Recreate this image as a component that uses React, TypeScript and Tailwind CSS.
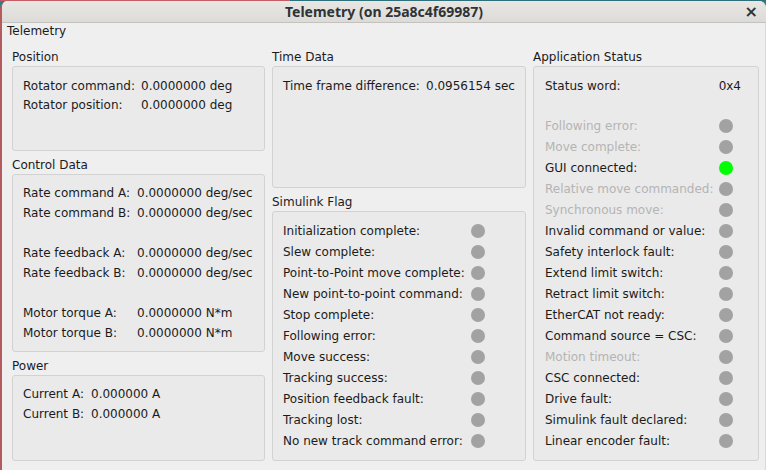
import type { ReactNode } from "react";

const font = { fontFamily: '"DejaVu Sans", sans-serif' };

function Box({ title, children, boxClass }: { title: string; children: ReactNode; boxClass: string }) {
  return (
    <div className="flex flex-col">
      <div className="h-[18px] pl-0 text-[12px] leading-[18px] text-[#1b1b1b]">{title}</div>
      <div className={`rounded-[3px] border border-[#d2d2d2] bg-[#eaeaea] ${boxClass}`}>{children}</div>
    </div>
  );
}

function Dot({ on }: { on?: boolean }) {
  return <span className={`block h-[14px] w-[14px] shrink-0 rounded-full ${on ? "bg-[#00ff00]" : "bg-[#a2a2a2]"}`} />;
}

const simulink = [
  "Initialization complete:",
  "Slew complete:",
  "Point-to-Point move complete:",
  "New point-to-point command:",
  "Stop complete:",
  "Following error:",
  "Move success:",
  "Tracking success:",
  "Position feedback fault:",
  "Tracking lost:",
  "No new track command error:",
];

const appStatus: { label: string; dim?: boolean; on?: boolean }[] = [
  { label: "Following error:", dim: true },
  { label: "Move complete:", dim: true },
  { label: "GUI connected:", on: true },
  { label: "Relative move commanded:", dim: true },
  { label: "Synchronous move:", dim: true },
  { label: "Invalid command or value:" },
  { label: "Safety interlock fault:" },
  { label: "Extend limit switch:" },
  { label: "Retract limit switch:" },
  { label: "EtherCAT not ready:" },
  { label: "Command source = CSC:" },
  { label: "Motion timeout:", dim: true },
  { label: "CSC connected:" },
  { label: "Drive fault:" },
  { label: "Simulink fault declared:" },
  { label: "Linear encoder fault:" },
];

function Pair({ label, value, w, h }: { label: string; value: string; w: string; h: string }) {
  return (
    <div className={`flex items-center ${h}`}>
      <span className={w}>{label}</span>
      <span>{value}</span>
    </div>
  );
}

export default function App() {
  return (
    <div className="h-[470px] w-[766px] overflow-hidden bg-[#2d7f8c]" style={font}>
      <div className="flex h-[1px]">
        <div className="w-[290px] bg-[#c35d63]" />
        <div className="flex-1 bg-[#2d6f7a]" />
      </div>
      <div className="flex h-[469px] flex-col overflow-hidden rounded-t-[7px] border-l-2 border-[#b35b5e] bg-[#efefef] text-[12px] text-[#1b1b1b]">
        <div className="relative flex h-[22px] items-center justify-center border-b border-[#c4c2bf] bg-gradient-to-b from-[#e9e7e4] to-[#dddbd8]">
          <span className="text-[14px] font-bold leading-[18px] text-[#2e3436]" style={{ fontFamily: '"Noto Sans", sans-serif' }}>
            Telemetry (on 25a8c4f69987)
          </span>
          <span className="absolute right-[8px] top-[2px] text-[16px] font-bold leading-[18px] text-[#2e3436]">×</span>
        </div>
        <div className="flex-1 border-r border-[#d8d8d8]">
          <div className="h-[17px] pl-[5px] leading-[17px]">Telemetry</div>
          <div className="grid grid-cols-[253px_254px_226px] gap-x-[7px] pl-[10px] pt-[8px]">
            <div className="flex flex-col gap-[5px]">
              <Box title="Position" boxClass="h-[85px] pt-[9px] pl-[10px]">
                <Pair label="Rotator command:" value="0.0000000 deg" w="w-[118px]" h="h-[19px]" />
                <Pair label="Rotator position:" value="0.0000000 deg" w="w-[118px]" h="h-[19px]" />
              </Box>
              <Box title="Control Data" boxClass="h-[178px] pt-[8px] pl-[10px]">
                <Pair label="Rate command A:" value="0.0000000 deg/sec" w="w-[114px]" h="h-[20px]" />
                <Pair label="Rate command B:" value="0.0000000 deg/sec" w="w-[114px]" h="h-[20px]" />
                <div className="h-[20px]" />
                <Pair label="Rate feedback A:" value="0.0000000 deg/sec" w="w-[114px]" h="h-[20px]" />
                <Pair label="Rate feedback B:" value="0.0000000 deg/sec" w="w-[114px]" h="h-[20px]" />
                <div className="h-[20px]" />
                <Pair label="Motor torque A:" value="0.0000000 N*m" w="w-[114px]" h="h-[20px]" />
                <Pair label="Motor torque B:" value="0.0000000 N*m" w="w-[114px]" h="h-[20px]" />
              </Box>
              <Box title="Power" boxClass="h-[86px] pt-[8px] pl-[10px]">
                <Pair label="Current A:" value="0.000000 A" w="w-[68px]" h="h-[20px]" />
                <Pair label="Current B:" value="0.000000 A" w="w-[68px]" h="h-[20px]" />
              </Box>
            </div>
            <div className="flex flex-col gap-[5px]">
              <Box title="Time Data" boxClass="h-[122px] pt-[9px] pl-[10px]">
                <Pair label="Time frame difference:" value="0.0956154 sec" w="w-[143px]" h="h-[19px]" />
              </Box>
              <Box title="Simulink Flag" boxClass="h-[250px] pt-[8px] pl-[10px]">
                {simulink.map((s) => (
                  <div key={s} className="flex h-[21px] items-center">
                    <span className="w-[188px]">{s}</span>
                    <Dot />
                  </div>
                ))}
              </Box>
            </div>
            <div className="flex flex-col">
              <Box title="Application Status" boxClass="h-[395px] pt-[9px] pl-[11px] pr-[17px]">
                <div className="flex h-[19px] items-center justify-between">
                  <span>Status word:</span>
                  <span>0x4</span>
                </div>
                <div className="h-[20px]" />
                {appStatus.map((s) => (
                  <div key={s.label} className="flex h-[21px] items-center justify-between pr-[8px]">
                    <span className={s.dim ? "text-[#b4b4b4]" : ""}>{s.label}</span>
                    <Dot on={s.on} />
                  </div>
                ))}
              </Box>
            </div>
          </div>
        </div>
      </div>
    </div>
  );
}
